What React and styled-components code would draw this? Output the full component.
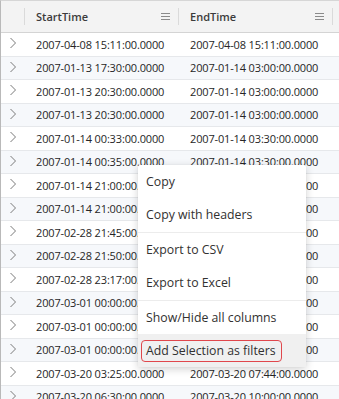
import React from 'react';
import styled, { createGlobalStyle } from 'styled-components';

const GlobalStyle = createGlobalStyle`
  html, body {
    margin: 0;
    padding: 0;
    background: #fff;
    overflow: hidden;
  }
  body {
    font-family: "Open Sans", "Noto Sans", sans-serif;
  }
`;

const Grid = styled.div`
  position: relative;
  width: 339px;
  height: 399px;
  overflow: hidden;
  border-left: 1px solid #b9b9b9;
  border-top: 1px solid #d6d6d6;
  box-sizing: border-box;
`;

const HeaderRow = styled.div`
  display: grid;
  grid-template-columns: 23px 154px 154px 1fr;
  height: 31px;
  background: #f3f3f3;
  border-bottom: 1px solid #d4d4d4;
`;

const HeaderCell = styled.div`
  display: flex;
  align-items: center;
  padding: 0 8px 0 11px;
  border-left: ${(p) => (p.$sep ? '1px solid #dadada' : 'none')};
  margin: 7px 0;
  font-size: 11px;
  font-weight: 600;
  color: #3b3b3b;
`;

const HeaderLabel = styled.span`
  flex: 1;
  margin-top: -1px;
`;

const MenuGlyph = styled.span`
  display: flex;
  flex-direction: column;
  gap: 2px;
  width: 9px;

  & > i {
    height: 1px;
    background: #8a8a8a;
  }
`;

const Row = styled.div`
  display: grid;
  grid-template-columns: 23px 154px 154px 1fr;
  height: 23.5px;
  box-sizing: border-box;
  background: ${(p) => (p.$alt ? '#f6f8fb' : '#fff')};
  border-bottom: 1px solid #e6e8eb;
`;

const Expander = styled.div`
  display: flex;
  justify-content: center;
  padding-top: 4px;
  padding-left: 1px;
`;

const Cell = styled.div`
  display: flex;
  align-items: center;
  padding-left: 12px;
  font-size: 11px;
  letter-spacing: -0.15px;
  color: #262626;
  white-space: nowrap;
  overflow: hidden;
`;

const Menu = styled.div`
  position: absolute;
  left: 137px;
  top: 164px;
  width: 168px;
  background: #fff;
  border-radius: 2px;
  box-shadow: 0 2px 8px rgba(0, 0, 0, 0.18), 0 0 1px rgba(0, 0, 0, 0.12);
  display: flex;
  flex-direction: column;
`;

const MenuItem = styled.div`
  display: flex;
  align-items: center;
  height: 33px;
  padding-left: 8px;
  font-size: 12.3px;
  color: #323130;
  background: ${(p) => (p.$active ? '#f0f0f0' : 'transparent')};
  white-space: nowrap;
`;

const Divider = styled.div`
  height: 1px;
  margin: 0.5px 0;
  background: #ececec;
`;

const Highlight = styled.span`
  margin-left: -5px;
  padding: 1px 5px 2px 4px;
  border: 1.5px solid #e0474c;
  border-radius: 4px;
`;

const Chevron = () => (
  <svg width="8" height="12" viewBox="0 0 8 12">
    <path d="M1.5 1 L6.5 6 L1.5 11" fill="none" stroke="#7a7a7a" strokeWidth="1" />
  </svg>
);

const rows = [
  ['2007-04-08 15:11:00.0000', '2007-04-08 15:11:00.0000'],
  ['2007-01-13 17:30:00.0000', '2007-01-14 03:00:00.0000'],
  ['2007-01-13 20:30:00.0000', '2007-01-14 03:00:00.0000'],
  ['2007-01-13 20:30:00.0000', '2007-01-14 03:00:00.0000'],
  ['2007-01-14 00:33:00.0000', '2007-01-14 03:30:00.0000'],
  ['2007-01-14 00:35:00.0000', '2007-01-14 03:30:00.0000'],
  ['2007-01-14 21:00:00.0000', '2007-01-15 03:00:00.0000'],
  ['2007-01-14 21:00:00.0000', '2007-01-15 03:00:00.0000'],
  ['2007-02-28 21:45:00.0000', '2007-03-01 03:00:00.0000'],
  ['2007-02-28 21:50:00.0000', '2007-03-01 03:00:00.0000'],
  ['2007-02-28 23:17:00.0000', '2007-03-01 03:00:00.0000'],
  ['2007-03-01 00:00:00.0000', '2007-03-01 03:00:00.0000'],
  ['2007-03-01 00:00:00.0000', '2007-03-01 03:00:00.0000'],
  ['2007-03-01 00:00:00.0000', '2007-03-01 03:00:00.0000'],
  ['2007-03-20 03:25:00.0000', '2007-03-20 07:44:00.0000'],
  ['2007-03-20 06:30:00.0000', '2007-03-20 10:00:00.0000'],
];

const Lines = () => (
  <MenuGlyph>
    <i />
    <i />
    <i />
  </MenuGlyph>
);

export default function App() {
  return (
    <>
      <GlobalStyle />
      <Grid>
        <HeaderRow>
          <HeaderCell />
          <HeaderCell $sep>
            <HeaderLabel>StartTime</HeaderLabel>
            <Lines />
          </HeaderCell>
          <HeaderCell $sep>
            <HeaderLabel>EndTime</HeaderLabel>
            <Lines />
          </HeaderCell>
          <HeaderCell $sep />
        </HeaderRow>
        {rows.map(([start, end], i) => (
          <Row key={i} $alt={i % 2 === 1}>
            <Expander>
              <Chevron />
            </Expander>
            <Cell>{start}</Cell>
            <Cell>{end}</Cell>
            <Cell />
          </Row>
        ))}
        <Menu>
          <MenuItem>Copy</MenuItem>
          <MenuItem>Copy with headers</MenuItem>
          <Divider />
          <MenuItem>Export to CSV</MenuItem>
          <MenuItem>Export to Excel</MenuItem>
          <Divider />
          <MenuItem>Show/Hide all columns</MenuItem>
          <MenuItem $active>
            <Highlight>Add Selection as filters</Highlight>
          </MenuItem>
        </Menu>
      </Grid>
    </>
  );
}
